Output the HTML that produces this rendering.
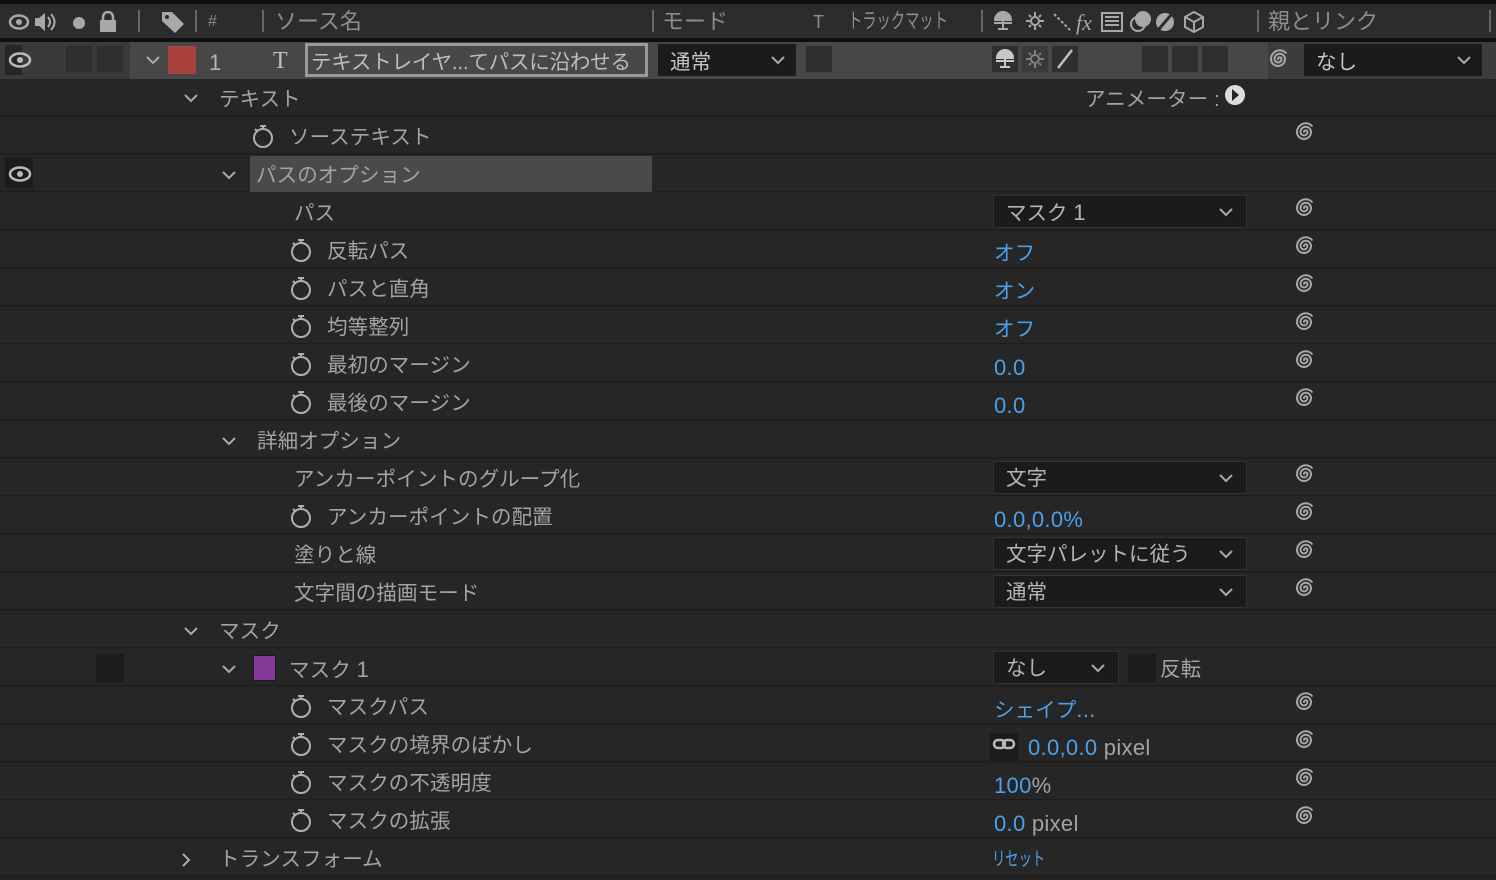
<!DOCTYPE html>
<html><head><meta charset="utf-8"><style>
*{margin:0;padding:0;box-sizing:border-box}
body{width:1496px;height:880px;background:#232323;position:relative;overflow:hidden;font-family:"Liberation Sans","Noto Sans CJK JP",sans-serif;color:#a3a3a3}
.a{position:absolute}
.r{position:absolute;left:0;width:1496px;height:37px;background:#262626;border-bottom:1px solid #1c1c1c}
.t{position:absolute;top:0;line-height:41px;font-size:20.5px;letter-spacing:0.1px;color:#a3a3a3;white-space:nowrap}
.b{color:#4da0ea}
.n{font-size:22px;letter-spacing:0.3px}
.dd{position:absolute;left:993px;top:2px;width:254px;height:33px;background:#1b1b1b;border:1px solid #333;font-size:20.5px;line-height:33px;padding-left:12px;color:#b5b5b5}
.dd svg{position:absolute;right:12px;top:11px}
.h{position:absolute;top:0;line-height:44px;font-size:22px;color:#8d8d8d;white-space:nowrap}
.sep{position:absolute;top:10px;width:2px;height:22px;background:#666}
.sp{position:absolute;left:1292px;top:3px;width:26px;height:26px}
</style></head><body>
<svg width="0" height="0" style="position:absolute">
<defs>
<g id="spg"><path d="M12 12A1.75 1.75 0 0 1 15.5 12A3.5 3.5 0 0 1 8.5 12A5.25 5.25 0 0 1 19 12A7 7 0 0 1 5 12A8.75 8.75 0 0 1 19.9 5.8" fill="none" stroke="#a8a8a8" stroke-width="2" stroke-linecap="round"/></g>
<g id="swg"><circle cx="12" cy="14" r="9" fill="none" stroke="#b0b0b0" stroke-width="2"/><path d="M9 2h6M12 2v3M4 5l2 2" stroke="#b0b0b0" stroke-width="2" fill="none"/></g>
<g id="chg"><path d="M2 2l6 6 6-6" fill="none" stroke="#aaa" stroke-width="2"/></g>
</defs></svg>
<div class="a" style="left:0;top:0;width:1496px;height:4px;background:#0f0f0f"></div>
<div class="a" style="left:0;top:4px;width:1496px;height:34px;background:#2c2c2c"></div>
<div class="a" style="left:0;top:38px;width:1496px;height:4px;background:#0f0f0f"></div>
<svg class="a" style="left:8px;top:11px" width="125" height="22" viewBox="0 0 125 22" fill="#a8a8a8">
<ellipse cx="11" cy="11" rx="9" ry="6.5" fill="none" stroke="#a8a8a8" stroke-width="2.5"/><circle cx="11" cy="11" r="3"/>
<path d="M27 7h4l6-5v18l-6-5h-4z"/><path d="M40 6q4 5 0 10M43 3q7 8 0 16" fill="none" stroke="#a8a8a8" stroke-width="2"/>
<circle cx="71" cy="12" r="6"/>
<rect x="92" y="9" width="16" height="12" rx="1"/><path d="M95 10v-4a5 5 0 0 1 10 0v4" fill="none" stroke="#a8a8a8" stroke-width="2.5"/>
</svg>
<div class="sep" style="left:138px"></div>
<svg class="a" style="left:160px;top:10px" width="26" height="24" viewBox="0 0 26 24"><path d="M2 2h10l12 12-9 9L2 11z" fill="#a8a8a8"/><circle cx="7" cy="7" r="2" fill="#2c2c2c"/></svg>
<div class="sep" style="left:195px"></div>
<div class="h" style="left:208px;font-size:16px">#</div>
<div class="sep" style="left:262px"></div>
<div class="h" style="left:275px">ソース名</div>
<div class="sep" style="left:652px"></div>
<div class="h" style="left:662px">モード</div>
<div class="h" style="left:813px;font-size:18px">T</div>
<div class="h" style="left:848px;font-size:21px;transform:scaleX(0.68);transform-origin:0 0">トラックマット</div>
<div class="sep" style="left:981px"></div>
<svg class="a" style="left:990px;top:8px" width="240" height="28" viewBox="0 0 240 28" fill="none" stroke="#a8a8a8" stroke-width="2">
<path d="M5 12a8 8 0 0 1 16 0z" fill="#a8a8a8"/><path d="M4 15h18M13 12v8M8 21h10"/>
<circle cx="45" cy="13" r="4"/><path d="M45 4v4M45 18v4M36 13h4M50 13h4M39 7l2 2M49 17l2 2M51 7l-2 2M41 17l-2 2"/>
<path d="M64 6l16 16" stroke-dasharray="3 2"/>
<text x="86" y="22" font-family="Liberation Serif" font-style="italic" font-size="22" fill="#a8a8a8" stroke="none">fx</text>
<rect x="112" y="5" width="20" height="18"/><path d="M115 9h14M115 13h14M115 17h14"/>
<circle cx="148" cy="16" r="7"/><circle cx="153" cy="11" r="7" fill="#a8a8a8"/>
<circle cx="175" cy="14" r="9" fill="#a8a8a8" stroke="none"/><path d="M169 21L181 7" stroke="#2c2c2c" stroke-width="3"/>
<path d="M204 4l9 5v10l-9 5-9-5V9z M195 9l9 5 9-5M204 14v10"/>
</svg>
<div class="sep" style="left:1257px"></div>
<div class="h" style="left:1268px">親とリンク</div>
<div class="sep" style="left:1489px"></div>

<div class="a" style="left:0;top:42px;width:1496px;height:37px;background:#474747"></div>
<div class="a" style="left:0;top:42px;width:130px;height:37px;background:#3a3a3a"></div>
<div class="a" style="left:5px;top:45px;width:17px;height:30px;background:#262626"></div>
<svg class="a" style="left:8px;top:52px" width="24" height="16"><ellipse cx="12" cy="8" rx="10" ry="6.5" fill="none" stroke="#bbb" stroke-width="2.5"/><circle cx="12" cy="8" r="3" fill="#bbb"/></svg>
<div class="a" style="left:66px;top:46px;width:26px;height:26px;background:#2f2f2f"></div>
<div class="a" style="left:97px;top:46px;width:26px;height:26px;background:#2f2f2f"></div>
<svg class="a" style="left:145px;top:55px" width="16" height="10"><use href="#chg"/></svg>
<div class="a" style="left:168px;top:46px;width:28px;height:28px;background:#a8403c"></div>
<div class="t n" style="left:209px;top:42px;color:#b5b5b5">1</div>
<div class="t" style="left:273px;top:41px;font-family:'Liberation Serif',serif;font-size:24px;color:#c0c0c0">T</div>
<div class="a" style="left:305px;top:43px;width:343px;height:34px;border:3px solid #9a9a9a;background:#484848"></div>
<div class="t" style="left:311px;top:42px;color:#bdbdbd;letter-spacing:-0.2px">テキストレイヤ...てパスに沿わせる</div>
<div class="a" style="left:658px;top:44px;width:138px;height:32px;background:#1b1b1b"></div>
<div class="t" style="left:670px;top:42px;color:#c5c5c5">通常</div>
<svg class="a" style="left:770px;top:55px" width="16" height="10"><use href="#chg"/></svg>
<div class="a" style="left:806px;top:46px;width:26px;height:26px;background:#2f2f2f"></div>
<div class="a" style="left:992px;top:46px;width:26px;height:26px;background:#2f2f2f"></div>
<svg class="a" style="left:992px;top:46px" width="26" height="26" fill="none" stroke="#c8c8c8" stroke-width="2"><path d="M5 12a8 8 0 0 1 16 0z" fill="#c8c8c8"/><path d="M4 15h18M13 12v8M8 21h10"/></svg>
<div class="a" style="left:1022px;top:46px;width:26px;height:26px;background:#3a3a3a"></div>
<svg class="a" style="left:1022px;top:46px" width="26" height="26" fill="none" stroke="#888" stroke-width="1.8"><circle cx="13" cy="13" r="4"/><path d="M13 4v4M13 18v4M4 13h4M18 13h4M7 7l2 2M17 17l2 2M19 7l-2 2M9 17l-2 2"/></svg>
<div class="a" style="left:1052px;top:46px;width:26px;height:26px;background:#2f2f2f"></div>
<svg class="a" style="left:1052px;top:46px" width="26" height="26"><path d="M6 22L20 4" stroke="#c0c0c0" stroke-width="2.5"/></svg>
<div class="a" style="left:1142px;top:46px;width:26px;height:26px;background:#2f2f2f"></div>
<div class="a" style="left:1172px;top:46px;width:26px;height:26px;background:#2f2f2f"></div>
<div class="a" style="left:1202px;top:46px;width:26px;height:26px;background:#2f2f2f"></div>
<div class="a" style="left:1268px;top:42px;width:228px;height:37px;background:#3c3c3c"></div>
<svg class="a" style="left:1266px;top:47px" width="26" height="26"><use href="#spg"/></svg>
<div class="a" style="left:1304px;top:44px;width:178px;height:32px;background:#1b1b1b"></div>
<div class="t" style="left:1316px;top:42px;color:#c5c5c5">なし</div>
<svg class="a" style="left:1456px;top:55px" width="16" height="10"><use href="#chg"/></svg>

<div class="r" style="top:79px"><svg class="a" style="left:183px;top:14px" width="16" height="10"><use href="#chg"/></svg><div class="t" style="left:219px">テキスト</div>
<div class="t" style="left:1085px">アニメーター :</div><svg class="a" style="left:1224px;top:5px" width="22" height="22"><circle cx="11" cy="11" r="10" fill="#ddd"/><path d="M8 5l7 6-7 6z" fill="#262626"/></svg></div>
<div class="r" style="top:117px"><svg class="a" style="left:251px;top:7px" width="24" height="24"><use href="#swg"/></svg><div class="t" style="left:289px">ソーステキスト</div><svg class="sp"><use href="#spg"/></svg></div>
<div class="r" style="top:155px"><div class="a" style="left:5px;top:3px;width:28px;height:30px;background:#1c1c1c"></div><svg class="a" style="left:8px;top:11px" width="24" height="16"><ellipse cx="12" cy="8" rx="10" ry="6.5" fill="none" stroke="#bbb" stroke-width="2.5"/><circle cx="12" cy="8" r="3" fill="#bbb"/></svg>
<svg class="a" style="left:221px;top:15px" width="16" height="10"><use href="#chg"/></svg><div class="a" style="left:250px;top:1px;width:402px;height:36px;background:#4a4a4a"></div><div class="t" style="left:256px">パスのオプション</div></div>
<div class="r" style="top:193px"><div class="t" style="left:294px">パス</div><div class="dd">マスク <span class="n">1</span><svg width="16" height="10"><use href="#chg"/></svg></div><svg class="sp"><use href="#spg"/></svg></div>
<div class="r" style="top:231px"><svg class="a" style="left:289px;top:7px" width="24" height="24"><use href="#swg"/></svg><div class="t" style="left:327px">反転パス</div><div class="t b" style="left:994px;top:2px">オフ</div><svg class="sp"><use href="#spg"/></svg></div>
<div class="r" style="top:269px"><svg class="a" style="left:289px;top:7px" width="24" height="24"><use href="#swg"/></svg><div class="t" style="left:327px">パスと直角</div><div class="t b" style="left:994px;top:2px">オン</div><svg class="sp"><use href="#spg"/></svg></div>
<div class="r" style="top:307px"><svg class="a" style="left:289px;top:7px" width="24" height="24"><use href="#swg"/></svg><div class="t" style="left:327px">均等整列</div><div class="t b" style="left:994px;top:2px">オフ</div><svg class="sp"><use href="#spg"/></svg></div>
<div class="r" style="top:345px"><svg class="a" style="left:289px;top:7px" width="24" height="24"><use href="#swg"/></svg><div class="t" style="left:327px">最初のマージン</div><div class="t b n" style="left:994px;top:2px">0.0</div><svg class="sp"><use href="#spg"/></svg></div>
<div class="r" style="top:383px"><svg class="a" style="left:289px;top:7px" width="24" height="24"><use href="#swg"/></svg><div class="t" style="left:327px">最後のマージン</div><div class="t b n" style="left:994px;top:2px">0.0</div><svg class="sp"><use href="#spg"/></svg></div>
<div class="r" style="top:421px"><svg class="a" style="left:221px;top:15px" width="16" height="10"><use href="#chg"/></svg><div class="t" style="left:257px">詳細オプション</div></div>
<div class="r" style="top:459px"><div class="t" style="left:294px">アンカーポイントのグループ化</div><div class="dd">文字<svg width="16" height="10"><use href="#chg"/></svg></div><svg class="sp"><use href="#spg"/></svg></div>
<div class="r" style="top:497px"><svg class="a" style="left:289px;top:7px" width="24" height="24"><use href="#swg"/></svg><div class="t" style="left:327px">アンカーポイントの配置</div><div class="t b n" style="left:994px;top:2px">0.0,0.0%</div><svg class="sp"><use href="#spg"/></svg></div>
<div class="r" style="top:535px"><div class="t" style="left:294px">塗りと線</div><div class="dd">文字パレットに従う<svg width="16" height="10"><use href="#chg"/></svg></div><svg class="sp"><use href="#spg"/></svg></div>
<div class="r" style="top:573px"><div class="t" style="left:294px">文字間の描画モード</div><div class="dd">通常<svg width="16" height="10"><use href="#chg"/></svg></div><svg class="sp"><use href="#spg"/></svg></div>
<div class="r" style="top:611px"><svg class="a" style="left:183px;top:15px" width="16" height="10"><use href="#chg"/></svg><div class="t" style="left:219px">マスク</div></div>
<div class="r" style="top:649px"><div class="a" style="left:96px;top:5px;width:28px;height:28px;background:#1c1c1c"></div><svg class="a" style="left:221px;top:15px" width="16" height="10"><use href="#chg"/></svg><div class="a" style="left:253px;top:6px;width:23px;height:26px;background:#853a9a;border:1px solid #1a1a1a"></div><div class="t" style="left:289px">マスク <span class="n">1</span></div>
<div class="dd" style="width:126px">なし<svg width="16" height="10"><use href="#chg"/></svg></div><div class="a" style="left:1128px;top:5px;width:28px;height:28px;background:#1c1c1c"></div><div class="t" style="left:1160px">反転</div></div>
<div class="r" style="top:687px"><svg class="a" style="left:289px;top:7px" width="24" height="24"><use href="#swg"/></svg><div class="t" style="left:327px">マスクパス</div><div class="t b" style="left:994px;top:2px">シェイプ<span class="n">...</span></div><svg class="sp"><use href="#spg"/></svg></div>
<div class="r" style="top:725px"><svg class="a" style="left:289px;top:7px" width="24" height="24"><use href="#swg"/></svg><div class="t" style="left:327px">マスクの境界のぼかし</div><div class="a" style="left:990px;top:8px;width:28px;height:28px;background:#1c1c1c"></div><svg class="a" style="left:992px;top:12px" width="24" height="14"><rect x="2" y="3" width="11" height="8" rx="4" fill="none" stroke="#bbb" stroke-width="2.5"/><rect x="11" y="3" width="11" height="8" rx="4" fill="none" stroke="#bbb" stroke-width="2.5"/></svg><div class="t n" style="left:1028px;top:2px"><span class="b">0.0,0.0</span> pixel</div><svg class="sp"><use href="#spg"/></svg></div>
<div class="r" style="top:763px"><svg class="a" style="left:289px;top:7px" width="24" height="24"><use href="#swg"/></svg><div class="t" style="left:327px">マスクの不透明度</div><div class="t n" style="left:994px;top:2px"><span class="b">100</span>%</div><svg class="sp"><use href="#spg"/></svg></div>
<div class="r" style="top:801px"><svg class="a" style="left:289px;top:7px" width="24" height="24"><use href="#swg"/></svg><div class="t" style="left:327px">マスクの拡張</div><div class="t n" style="left:994px;top:2px"><span class="b">0.0</span> pixel</div><svg class="sp"><use href="#spg"/></svg></div>
<div class="r" style="top:839px"><svg class="a" style="left:180px;top:13px" width="12" height="16"><path d="M3 2l6 6-6 6" fill="none" stroke="#aaa" stroke-width="2"/></svg><div class="t" style="left:219px">トランスフォーム</div><div class="t b" style="left:992px;font-size:19px;letter-spacing:0;transform:scaleX(0.7);transform-origin:0 0">リセット</div></div>
</body></html>
